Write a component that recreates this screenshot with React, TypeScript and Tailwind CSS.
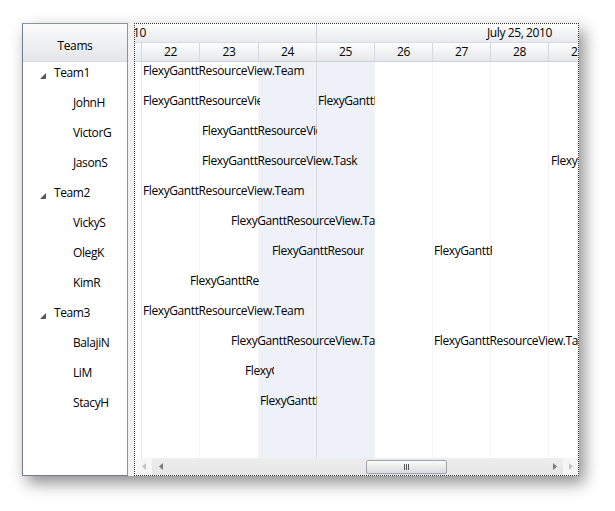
import React from "react";

const FONT = { fontFamily: '"Open Sans", "Noto Sans", sans-serif' };

type Task = { left: number; width: number };
type Row = { name: string; team: boolean; label: string; tasks: Task[] };

const rows: Row[] = [
  { name: "Team1", team: true, label: "FlexyGanttResourceView.Team", tasks: [{ left: 8, width: 200 }] },
  { name: "JohnH", team: false, label: "FlexyGanttResourceView.Task", tasks: [{ left: 8, width: 117 }, { left: 183, width: 57 }] },
  { name: "VictorG", team: false, label: "FlexyGanttResourceView.Task", tasks: [{ left: 67, width: 115 }] },
  { name: "JasonS", team: false, label: "FlexyGanttResourceView.Task", tasks: [{ left: 67, width: 200 }, { left: 416, width: 120 }] },
  { name: "Team2", team: true, label: "FlexyGanttResourceView.Team", tasks: [{ left: 8, width: 200 }] },
  { name: "VickyS", team: false, label: "FlexyGanttResourceView.Task", tasks: [{ left: 96, width: 144 }] },
  { name: "OlegK", team: false, label: "FlexyGanttResourceView.Task", tasks: [{ left: 137, width: 92 }, { left: 299, width: 58 }] },
  { name: "KimR", team: false, label: "FlexyGanttResourceView.Task", tasks: [{ left: 55, width: 69 }] },
  { name: "Team3", team: true, label: "FlexyGanttResourceView.Team", tasks: [{ left: 8, width: 200 }] },
  { name: "BalajiN", team: false, label: "FlexyGanttResourceView.Task", tasks: [{ left: 96, width: 144 }, { left: 299, width: 200 }] },
  { name: "LiM", team: false, label: "FlexyGanttResourceView.Task", tasks: [{ left: 110, width: 29 }] },
  { name: "StacyH", team: false, label: "FlexyGanttResourceView.Task", tasks: [{ left: 125, width: 57 }] },
];

const colWidths = [7, 58, 59, 58, 58, 58, 58, 58, 58];
const days = ["", "22", "23", "24", "25", "26", "27", "28", "29"];

function Expander() {
  return (
    <svg width="6" height="6" viewBox="0 0 6 6" className="shrink-0">
      <path d="M6 0 L6 6 L0 6 Z" fill="#595959" />
    </svg>
  );
}

function ArrowL({ c }: { c: string }) {
  return (
    <svg width="4" height="7" viewBox="0 0 4 7">
      <path d="M4 0 L4 7 L0 3.5 Z" fill={c} />
    </svg>
  );
}
function ArrowR({ c }: { c: string }) {
  return (
    <svg width="4" height="7" viewBox="0 0 4 7">
      <path d="M0 0 L0 7 L4 3.5 Z" fill={c} />
    </svg>
  );
}

export default function App() {
  return (
    <div className="w-[615px] h-[511px] bg-white pl-[22px] pt-[23px] text-[12px] tracking-[-0.4px] text-black" style={FONT}>
      <div className="flex w-[557px] h-[453px] gap-[6px] bg-[#f2f2f2] shadow-[5px_7px_15px_rgba(0,0,0,0.45)]">
        {/* Left tree panel */}
        <div className="w-[106px] h-full flex flex-col bg-white border border-[#8a94a0] border-l-[#6f7c8c] border-b-[#6f7c8c]">
          <div className="h-[38px] flex items-center justify-center bg-gradient-to-b from-[#fbfbfb] to-[#e4e6e9] border-b border-[#d5d8dc] pt-[6px]">
            Teams
          </div>
          <div className="flex flex-col">
            {rows.map((r) => (
              <div key={r.name} className="h-[30px] pt-[2px] leading-[18px] flex items-start">
                {r.team ? (
                  <div className="flex items-center pl-[17px]">
                    <div className="pt-[5px]"><Expander /></div>
                    <span className="ml-[8px]">{r.name}</span>
                  </div>
                ) : (
                  <span className="pl-[50px]">{r.name}</span>
                )}
              </div>
            ))}
          </div>
        </div>

        {/* Right gantt panel */}
        <div className="w-[445px] h-full flex flex-col bg-white border border-dotted border-[#333]">
          {/* header */}
          <div className="h-[19px] overflow-hidden border-b border-[#d8dbdf] bg-gradient-to-b from-[#fdfdfd] to-[#e8eaed]">
            <div className="flex ml-[-224px] h-full leading-[18px]">
              <div className="w-[406px] shrink-0 text-center border-r border-[#d0d3d7]">July 18, 2010</div>
              <div className="w-[406px] shrink-0 text-center border-r border-[#d0d3d7]">July 25, 2010</div>
            </div>
          </div>
          <div className="h-[19px] overflow-hidden flex border-b border-[#cfd3d8] bg-gradient-to-b from-[#fdfdfd] to-[#e6e8eb] leading-[18px]">
            {colWidths.map((w, i) => (
              <div key={i} className="shrink-0 text-center border-r border-[#d6d9dd]" style={{ width: w }}>
                {days[i]}
              </div>
            ))}
          </div>
          {/* body */}
          <div className="h-[396px] grid overflow-hidden">
            <div className="[grid-area:1/1] flex h-full">
              {colWidths.map((w, i) => (
                <div
                  key={i}
                  className={
                    "shrink-0 h-full border-r " +
                    (i === 3 ? "bg-[#eef2f8] border-[#d6d9de]" : i === 4 ? "bg-[#eef2f8] border-[#f3f4f6]" : i === 0 ? "border-[#e4e6e9]" : "border-[#f5f5f5]")
                  }
                  style={{ width: w }}
                />
              ))}
            </div>
            <div className="[grid-area:1/1] flex flex-col">
              {rows.map((r) => (
                <div key={r.name} className="relative h-[30px] shrink-0">
                  {r.tasks.map((t, j) => (
                    <div
                      key={j}
                      className="absolute top-0 h-[18px] leading-[18px] overflow-hidden whitespace-nowrap"
                      style={{ left: t.left, width: t.width }}
                    >
                      {r.label}
                    </div>
                  ))}
                </div>
              ))}
            </div>
          </div>
          {/* scrollbar */}
          <div className="h-[17px] flex items-center bg-gradient-to-b from-[#eeeeee] to-[#e6e6e6]">
            <div className="w-[17px] h-full flex items-center justify-center bg-[#f6f6f6]"><ArrowL c="#c4c4c4" /></div>
            <div className="w-[17px] h-full flex items-center justify-center"><ArrowL c="#7a7a7a" /></div>
            <div className="w-[197px]" />
            <div className="w-[81px] h-[14px] rounded-[2px] border border-[#9ea3a8] bg-gradient-to-b from-[#fbfbfb] to-[#d9dbde] flex items-center justify-center gap-[1px]">
              <div className="w-[1px] h-[6px] bg-[#555]" />
              <div className="w-[1px] h-[6px] bg-[#555]" />
              <div className="w-[1px] h-[6px] bg-[#555]" />
            </div>
            <div className="flex-1" />
            <div className="w-[16px] h-full flex items-center justify-center"><ArrowR c="#7a7a7a" /></div>
            <div className="w-[15px] h-full flex items-center justify-center bg-[#f6f6f6]"><ArrowR c="#c4c4c4" /></div>
          </div>
        </div>
      </div>
    </div>
  );
}
